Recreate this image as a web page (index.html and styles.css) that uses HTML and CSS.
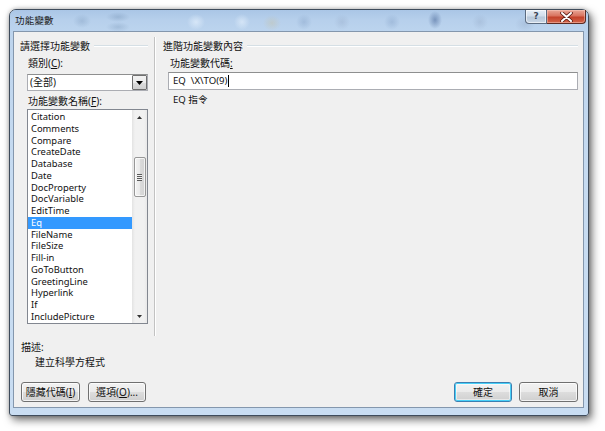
FILE: index.html
```html
<!DOCTYPE html>
<html lang="zh-Hant">
<head>
<meta charset="utf-8">
<title>功能變數</title>
<link rel="stylesheet" href="styles.css">
</head>
<body>
<div class="window">
  <div class="titlebar">
    <span class="title">功能變數</span>
    <div class="controls">
      <div class="btn-help">?</div>
      <div class="btn-close">
        <svg width="13" height="10" viewBox="0 0 13 10"><path d="M2 1 L11 9 M11 1 L2 9" stroke="#5a1a12" stroke-width="3.6" stroke-linecap="round"/><path d="M2 1 L11 9 M11 1 L2 9" stroke="#fff" stroke-width="2" stroke-linecap="round"/></svg>
      </div>
    </div>
  </div>
  <div class="client">
    <div class="main">
      <div class="left">
        <div class="group-title"><span>請選擇功能變數</span></div>
        <div class="left-body">
          <div class="label lbl-cat">類別(<u>C</u>):</div>
          <div class="combo">
            <span class="combo-text">(全部)</span>
            <span class="combo-btn"><svg width="7" height="4" viewBox="0 0 7 4"><path d="M0 0 H7 L3.5 4 Z" fill="#000"/></svg></span>
          </div>
          <div class="label lbl-name">功能變數名稱(<u>F</u>):</div>
          <div class="listbox">
            <ul class="items">
              <li>Citation</li>
              <li>Comments</li>
              <li>Compare</li>
              <li>CreateDate</li>
              <li>Database</li>
              <li>Date</li>
              <li>DocProperty</li>
              <li>DocVariable</li>
              <li>EditTime</li>
              <li class="selected">Eq</li>
              <li>FileName</li>
              <li>FileSize</li>
              <li>Fill-in</li>
              <li>GoToButton</li>
              <li>GreetingLine</li>
              <li>Hyperlink</li>
              <li>If</li>
              <li>IncludePicture</li>
            </ul>
            <div class="scrollbar">
              <div class="sb-arrow"><svg width="5" height="3" viewBox="0 0 5 3"><path d="M0 3 H5 L2.5 0 Z" fill="#333"/></svg></div>
              <div class="sb-gap"></div>
              <div class="sb-thumb"><span class="grip"></span></div>
              <div class="sb-fill"></div>
              <div class="sb-arrow"><svg width="5" height="3" viewBox="0 0 5 3"><path d="M0 0 H5 L2.5 3 Z" fill="#333"/></svg></div>
            </div>
          </div>
        </div>
      </div>
      <div class="right">
        <div class="group-title"><span>進階功能變數內容</span></div>
        <div class="right-body">
          <div class="label lbl-code">功能變數代碼<u>:</u></div>
          <div class="textbox"><span class="code">EQ  \X\TO(9)</span><span class="caret"></span></div>
          <div class="hint">EQ 指令</div>
        </div>
      </div>
    </div>
    <div class="desc-label">描述:</div>
    <div class="desc-text">建立科學方程式</div>
    <div class="footer">
      <div class="btn-group">
        <button class="btn w59">隱藏代碼(<u>I</u>)</button>
        <button class="btn w58">選項(<u>O</u>)...</button>
      </div>
      <div class="btn-group right-group">
        <button class="btn w58 default">確定</button>
        <button class="btn w59">取消</button>
      </div>
    </div>
  </div>
</div>
</body>
</html>
```

FILE: styles.css
```css
* { box-sizing: border-box; }

html, body {
  margin: 0;
  padding: 0;
  width: 605px;
  height: 431px;
  overflow: hidden;
  background: #ffffff;
  font-family: "Noto Sans", "Noto Sans CJK TC", sans-serif;
  font-size: 10px;
  color: #111;
}

u { text-decoration: underline; text-underline-offset: 1px; }

.window {
  margin: 9px 0 0 9px;
  width: 580px;
  height: 407px;
  border: 1px solid #3f4c5c;
  border-radius: 7px 7px 3px 3px;
  background: linear-gradient(180deg, #bcd3ec 0%, #c6dbf1 40%, #c9ddf2 100%);
  box-shadow: 3px 4px 9px rgba(0, 0, 0, 0.55), 0 0 4px rgba(0, 0, 0, 0.25);
  display: flex;
  flex-direction: column;
}

.titlebar {
  height: 21px;
  display: flex;
  align-items: flex-start;
  justify-content: space-between;
  padding-left: 5px;
  border-radius: 6px 6px 0 0;
  background:
    radial-gradient(ellipse 9px 7px at 72px 11px, rgba(120,150,185,0.35), transparent),
    radial-gradient(ellipse 12px 5px at 108px 7px, rgba(110,140,175,0.35), transparent),
    radial-gradient(ellipse 12px 5px at 108px 17px, rgba(110,140,175,0.3), transparent),
    radial-gradient(ellipse 9px 8px at 186px 12px, rgba(235,245,255,0.6), transparent),
    radial-gradient(ellipse 8px 8px at 232px 12px, rgba(235,245,255,0.55), transparent),
    radial-gradient(ellipse 9px 8px at 262px 13px, rgba(200,190,150,0.35), transparent),
    radial-gradient(ellipse 8px 8px at 294px 12px, rgba(120,150,190,0.35), transparent),
    radial-gradient(ellipse 8px 8px at 332px 12px, rgba(140,160,190,0.3), transparent),
    radial-gradient(ellipse 8px 8px at 382px 12px, rgba(120,150,190,0.35), transparent),
    radial-gradient(ellipse 7px 9px at 425px 10px, rgba(70,100,150,0.55), transparent),
    radial-gradient(ellipse 8px 8px at 470px 12px, rgba(140,160,190,0.3), transparent),
    radial-gradient(ellipse 10px 8px at 515px 14px, rgba(140,160,190,0.3), transparent),
    linear-gradient(180deg, #aac6e6 0%, #b7d0ec 50%, #bcd4ee 100%);
}

.title {
  margin-top: 5px;
  font-size: 9.5px;
  line-height: 11px;
  color: #1a1a1a;
  letter-spacing: 0.2px;
}

.controls {
  display: flex;
  margin-right: 2px;
}

.btn-help {
  width: 22px;
  height: 14px;
  border: 1px solid #5b6b80;
  border-top: none;
  border-radius: 0 0 0 4px;
  background: linear-gradient(180deg, #e6eef7 0%, #d2deeb 45%, #b8c8da 55%, #c9d7e6 100%);
  color: #3a4656;
  font-family: "DejaVu Sans", sans-serif;
  font-weight: bold;
  font-size: 9px;
  line-height: 13px;
  text-align: center;
  box-shadow: inset 0 0 0 1px rgba(255,255,255,0.6);
}

.btn-close {
  width: 39px;
  height: 14px;
  border: 1px solid #5b2a22;
  border-left: none;
  border-top: none;
  border-radius: 0 0 4px 0;
  background: linear-gradient(180deg, #e9a797 0%, #d9735f 45%, #c3422b 55%, #d3664c 100%);
  display: flex;
  align-items: center;
  justify-content: center;
  box-shadow: inset 0 0 0 1px rgba(255,210,200,0.45);
}

.client {
  flex: 1;
  margin: 0 4px 7px 3px;
  border: 1px solid #8497ad;
  background: #f0f0f0;
  display: flex;
  flex-direction: column;
}

.main {
  height: 304px;
  display: flex;
}

.left {
  width: 140px;
  padding: 8px 6px 0 6px;
}

.right {
  flex: 1;
  margin-top: 5px;
  border-left: 1px solid #c2c2c2;
  box-shadow: inset 1px 0 0 #ffffff;
  padding: 3px 5px 0 8px;
}

.group-title {
  height: 12px;
  display: flex;
  align-items: center;
  line-height: 12px;
  white-space: nowrap;
}

.group-title::after {
  content: "";
  flex: 1;
  margin-left: 4px;
  border-top: 1px solid #d5dfe5;
  border-bottom: 1px solid #ffffff;
}

.left-body {
  padding-left: 7px;
}

.label {
  height: 12px;
  line-height: 12px;
  white-space: nowrap;
}

.lbl-cat { margin-top: 5px; padding-left: 1px; }
.lbl-name { margin-top: 4px; padding-left: 1px; }

.combo {
  margin-top: 5px;
  height: 17px;
  border: 1px solid #abadb3;
  border-top-color: #8e8f8f;
  background: #fff;
  display: flex;
  align-items: stretch;
}

.combo-text {
  flex: 1;
  padding-left: 2px;
  line-height: 15px;
}

.combo-btn {
  width: 15px;
  margin: 0 0 0 0;
  border: 1px solid #707070;
  border-radius: 1px;
  background: linear-gradient(180deg, #f2f2f2 0%, #ebebeb 50%, #dddddd 51%, #cfcfcf 100%);
  display: flex;
  align-items: center;
  justify-content: center;
}

.listbox {
  margin-top: 2px;
  height: 215px;
  border: 1px solid #828790;
  background: #fff;
  display: flex;
}

.items {
  list-style: none;
  margin: 0;
  padding: 1px 0 0 0;
  flex: 1;
  overflow: hidden;
  font-size: 9.4px;
}

.items li {
  height: 11.76px;
  line-height: 11.76px;
  padding-left: 3px;
  white-space: nowrap;
}

.items li.selected {
  background: #3399ff;
  color: #fff;
}

.scrollbar {
  width: 15px;
  background: linear-gradient(90deg, #e3e3e3 0%, #f1f1f1 20%, #f1f1f1 80%, #e8e8e8 100%);
  display: flex;
  flex-direction: column;
  align-items: center;
}

.sb-arrow {
  height: 14px;
  width: 100%;
  display: flex;
  align-items: center;
  justify-content: center;
}

.sb-gap { height: 33px; }

.sb-thumb {
  width: 12px;
  height: 40px;
  border: 1px solid #979797;
  border-radius: 2px;
  background: linear-gradient(90deg, #f3f3f3 0%, #e9e9e9 50%, #dadada 55%, #d3d3d3 100%);
  display: flex;
  align-items: center;
  justify-content: center;
  box-shadow: inset 0 0 0 1px rgba(255,255,255,0.7);
}

.grip {
  width: 5px;
  height: 7px;
  background: repeating-linear-gradient(180deg, #5a5a5a 0px, #5a5a5a 1px, #f0f0f0 1px, #f0f0f0 2px);
}

.sb-fill { flex: 1; }

.right-body {
  padding-left: 5px;
}

.lbl-code { margin-top: 5px; padding-left: 2px; }

.textbox {
  margin-top: 3px;
  height: 18px;
  border: 1px solid #abadb3;
  border-top-color: #8e8f8f;
  background: #fff;
  display: flex;
  align-items: center;
  padding-left: 4px;
}

.code {
  white-space: pre;
  font-size: 9.6px;
  line-height: 14px;
}

.caret {
  width: 1px;
  height: 12px;
  background: #000;
  margin-left: 1px;
}

.hint {
  margin-top: 4px;
  height: 12px;
  line-height: 12px;
  padding-left: 5px;
  font-size: 9.6px;
}

.desc-label {
  margin-top: 5px;
  height: 12px;
  line-height: 12px;
  padding-left: 7px;
}

.desc-text {
  margin-top: 3px;
  height: 12px;
  line-height: 12px;
  padding-left: 21px;
}

.footer {
  margin-top: 14px;
  padding: 0 5px 0 7px;
  display: flex;
  justify-content: space-between;
}

.btn-group {
  display: flex;
  gap: 8px;
}

.right-group { gap: 7px; }

.btn {
  height: 20px;
  padding: 0;
  border: 1px solid #707070;
  border-radius: 3px;
  background: linear-gradient(180deg, #f2f2f2 0%, #ebebeb 48%, #dddddd 52%, #cfcfcf 100%);
  box-shadow: inset 0 0 0 1px rgba(255,255,255,0.75);
  font-family: "Noto Sans", "Noto Sans CJK TC", sans-serif;
  font-size: 10px;
  line-height: 18px;
  color: #111;
  text-align: center;
}

.w58 { width: 58px; }
.w59 { width: 59px; }

.btn.default {
  border-color: #3c7fb1;
  box-shadow: inset 0 0 0 1px #48d0f8, inset 0 0 0 2px rgba(255,255,255,0.5);
}
```
